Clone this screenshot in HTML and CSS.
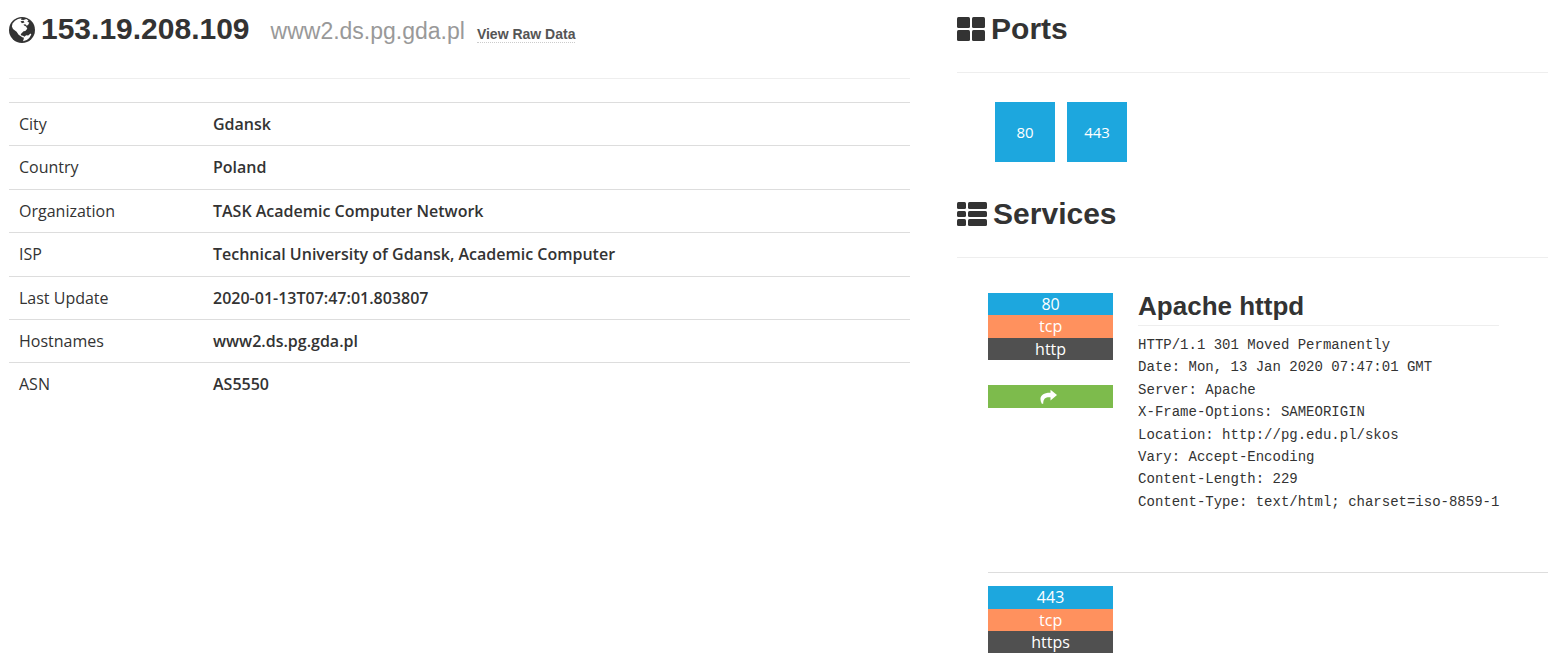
FILE: index.html
```
<!DOCTYPE html>
<html lang="en">
<head>
<meta charset="utf-8">
<meta name="viewport" content="width=device-width, initial-scale=1">
<title>153.19.208.109</title>
<link rel="stylesheet" href="styles.css">
</head>
<body>
<main class="host">
  <section class="summary">
    <header class="summary-head">
      <svg class="globe" viewBox="0 0 26 26" aria-hidden="true"><circle cx="13" cy="13" r="13" fill="#333"/><path fill="#fff" d="M3.500 6.500 6 3.800 9 2l3.500-.8-.5 1.600 2.500.1 2.800-1 2.200 1.600-1.200 1 2 1.200-1.400 2.500-1.800.3-.6-1.300-2 .4.600 1 2 .8 1.200 2.400-2 2.200-1.700.3-2 2-.8.900.2 1.100 2.600.600 1.400 2-2.700-.6-3.700-2.500-2-3L4 12 2.900 9.500zM15 20l2.200-1.800 2 .3L21.500 16.500l.8.900-2 3.600-2.500 2-3.800 1.200.6-1.800z"/><path fill="#333" d="m11.500 4.200 3-.4 1 1.700-2.600.8z"/></svg>
      <h1 class="title">153.19.208.109</h1>
      <span class="hostname">www2.ds.pg.gda.pl</span>
      <a class="raw" href="#raw">View Raw Data</a>
    </header>
    <table class="facts">
      <tbody>
        <tr><th scope="row">City</th><td>Gdansk</td></tr>
        <tr><th scope="row">Country</th><td>Poland</td></tr>
        <tr><th scope="row">Organization</th><td>TASK Academic Computer Network</td></tr>
        <tr><th scope="row">ISP</th><td>Technical University of Gdansk, Academic Computer</td></tr>
        <tr><th scope="row">Last Update</th><td>2020-01-13T07:47:01.803807</td></tr>
        <tr><th scope="row">Hostnames</th><td>www2.ds.pg.gda.pl</td></tr>
        <tr><th scope="row">ASN</th><td>AS5550</td></tr>
      </tbody>
    </table>
  </section>

  <div class="details">
    <section>
      <h2 class="title section-title">
        <svg class="grid-icon" viewBox="0 0 28 24" aria-hidden="true"><g fill="#333"><rect width="13" height="11" rx="1.500"/><rect x="15" width="13" height="11" rx="1.500"/><rect y="13" width="13" height="11" rx="1.500"/><rect x="15" y="13" width="13" height="11" rx="1.500"/></g></svg>
        Ports
      </h2>
      <nav class="ports" aria-label="Ports">
        <a class="port" href="#port-80">80</a>
        <a class="port" href="#port-443">443</a>
      </nav>
    </section>
    <section>
      <h2 class="title section-title">
        <svg class="list-icon" viewBox="0 0 30 24" aria-hidden="true"><g fill="#333"><rect width="9" height="7" rx="1.500"/><rect x="11" width="19" height="7" rx="1.500"/><rect y="9" width="9" height="6" rx="1.500"/><rect x="11" y="9" width="19" height="6" rx="1.500"/><rect y="17" width="9" height="7" rx="1.500"/><rect x="11" y="17" width="19" height="7" rx="1.500"/></g></svg>
        Services
      </h2>
      <div class="services">
        <article class="service" id="port-80">
          <div class="tags">
            <div class="tag tag-port">80</div>
            <div class="tag tag-proto">tcp</div>
            <div class="tag tag-name">http</div>
            <a class="tag tag-open" href="#open-80" aria-label="Open service"><svg class="arrow" viewBox="0 0 18 16" aria-hidden="true"><path fill="#fff" d="M10.500.8 17 6l-6.500 5.400V8.300C6 8 3.300 9 3.200 14.800H1.800C-1.800 8 2 3.500 10.500 3.700z"/></svg></a>
          </div>
          <div class="banner">
            <h3 class="product">Apache httpd</h3>
            <pre class="response">HTTP/1.1 301 Moved Permanently
Date: Mon, 13 Jan 2020 07:47:01 GMT
Server: Apache
X-Frame-Options: SAMEORIGIN
Location: http://pg.edu.pl/skos
Vary: Accept-Encoding
Content-Length: 229
Content-Type: text/html; charset=iso-8859-1</pre>
          </div>
        </article>
        <article class="service" id="port-443">
          <div class="tags">
            <div class="tag tag-port">443</div>
            <div class="tag tag-proto">tcp</div>
            <div class="tag tag-name">https</div>
          </div>
        </article>
      </div>
    </section>
  </div>
</main>
</body>
</html>
```
FILE: styles.css
```
* { box-sizing: border-box; }
body {
  margin: 0;
  background: #fff;
  color: #333;
  font: 16px/1.4 "Open Sans", "Noto Sans", sans-serif;
}
.host {
  display: grid;
  grid-template-columns: minmax(0, 61fr) minmax(0, 40fr);
  gap: 47px;
  padding: 9px 0 11px 9px;
}
.title {
  display: flex;
  align-items: center;
  gap: 6px;
  margin: 0;
  font: bold 30px/40px "Liberation Sans", Arial, sans-serif;
}
.summary-head {
  display: flex;
  align-items: baseline;
  height: 70px;
  margin-bottom: 23px;
  border-bottom: 1px solid #eee;
  font-family: "Liberation Sans", Arial, sans-serif;
}
.globe {
  align-self: flex-start;
  width: 26px;
  height: 26px;
  margin: 8px 6px 0 0;
}
.hostname { margin: 0 12px 0 21px; color: #999; font-size: 23px; }
.raw {
  border-bottom: 1px dotted #ccc;
  color: #555;
  font-size: 14px;
  font-weight: bold;
  line-height: 16px;
  text-decoration: none;
}
.facts { width: 100%; border-collapse: collapse; }
.facts th, .facts td {
  padding: 10px;
  border-top: 1px solid #ddd;
  text-align: left;
}
.facts th { width: 194px; font-weight: 400; }
.facts td { font-weight: 600; }
.section-title {
  height: 64px;
  padding-bottom: 23px;
  border-bottom: 1px solid #eee;
}
.grid-icon { width: 28px; height: 24px; }
.list-icon { width: 30px; height: 24px; }
.ports { display: flex; gap: 12px; padding: 29px 38px 32px; }
.port {
  width: 60px;
  background: #1da7de;
  color: #fff;
  font-size: 15px;
  line-height: 60px;
  text-align: center;
  text-decoration: none;
}
.services { padding: 35px 0 0 31px; }
.service { display: flex; align-items: flex-start; gap: 25px; }
.service + .service {
  margin-top: 59px;
  padding-top: 13px;
  border-top: 1px solid #ddd;
}
.tags { width: 125px; }
.tag { color: #fff; text-align: center; }
.tag-port { background: #1da7de; }
.tag-proto { background: #ff915e; }
.tag-name { background: #505050; }
.tag-open {
  display: flex;
  align-items: center;
  justify-content: center;
  height: 23px;
  margin-top: 25px;
  padding-right: 4px;
  background: #7dbb4c;
}
.arrow { width: 18px; height: 16px; }
.product {
  margin: 0 0 8px;
  padding-bottom: 6px;
  border-bottom: 1px solid #eee;
  font: bold 26px/26px "Liberation Sans", Arial, sans-serif;
}
.response {
  margin: 0;
  font: 14px/1.6 "Liberation Mono", Consolas, monospace;
}
```
